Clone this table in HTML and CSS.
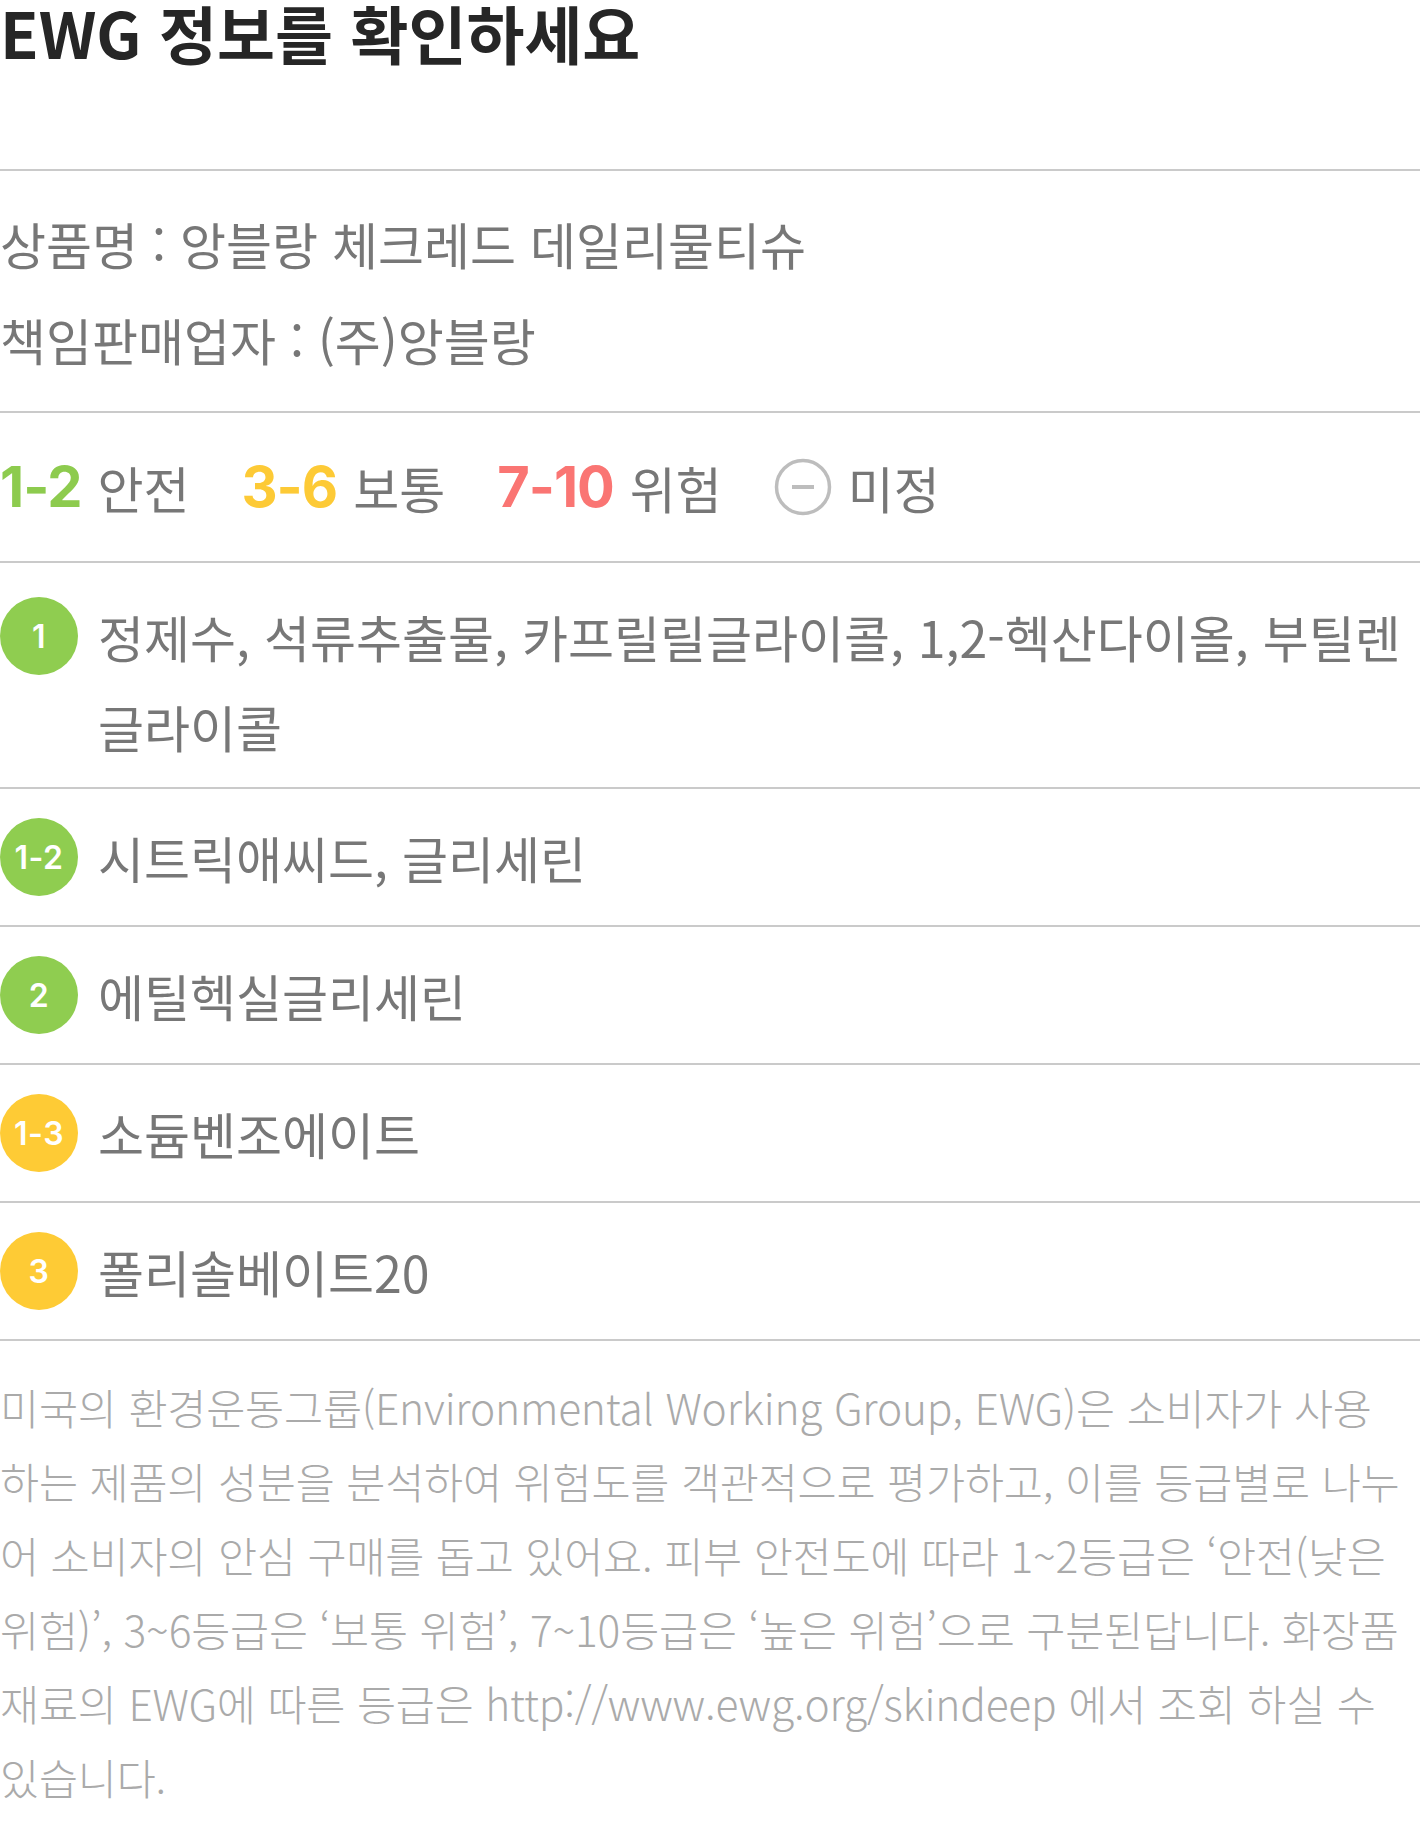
FILE: index.html
```html
<!DOCTYPE html>
<html lang="ko">
<head>
<meta charset="utf-8">
<title>EWG 정보</title>
<link rel="stylesheet" href="styles.css">
</head>
<body>
<div class="page">
  <h1 class="title">EWG 정보를 확인하세요</h1>
  <section class="product">
    <p>상품명 : 앙블랑 체크레드 데일리물티슈</p>
    <p>책임판매업자 : (주)앙블랑</p>
  </section>
  <section class="legend">
    <span class="lg"><b class="num green">1-2</b>안전</span>
    <span class="lg"><b class="num yellow">3-6</b>보통</span>
    <span class="lg"><b class="num red">7-10</b>위험</span>
    <span class="lg"><svg class="none-icon" viewBox="0 0 58 58" width="58" height="58"><circle cx="29" cy="29" r="26.5" fill="none" stroke="#bdbdbd" stroke-width="3.5"/><line x1="18" y1="29" x2="40" y2="29" stroke="#bdbdbd" stroke-width="4"/></svg>미정</span>
  </section>
  <ul class="ingredients">
    <li class="row multi"><span class="badge green">1</span><span class="name">정제수, 석류추출물, 카프릴릴글라이콜, 1,2-헥산다이올, 부틸렌글라이콜</span></li>
    <li class="row"><span class="badge green">1-2</span><span class="name">시트릭애씨드, 글리세린</span></li>
    <li class="row"><span class="badge green">2</span><span class="name">에틸헥실글리세린</span></li>
    <li class="row"><span class="badge yellow">1-3</span><span class="name">소듐벤조에이트</span></li>
    <li class="row"><span class="badge yellow">3</span><span class="name">폴리솔베이트20</span></li>
  </ul>
  <p class="note">미국의 환경운동그룹(Environmental Working Group, EWG)은 소비자가 사용<br>하는 제품의 성분을 분석하여 위험도를 객관적으로 평가하고, 이를 등급별로 나누<br>어 소비자의 안심 구매를 돕고 있어요. 피부 안전도에 따라 1~2등급은 ‘안전(낮은<br>위험)’, 3~6등급은 ‘보통 위험’, 7~10등급은 ‘높은 위험’으로 구분된답니다. 화장품<br>재료의 EWG에 따른 등급은 http://www.ewg.org/skindeep 에서 조회 하실 수<br>있습니다.</p>
</div>
</body>
</html>
```

FILE: styles.css
```css
html, body {
  margin: 0;
  padding: 0;
  background: #ffffff;
}

body {
  font-family: "Noto Sans CJK KR", "Noto Sans", sans-serif;
  color: #777777;
}

.page {
  width: 1420px;
}

.title {
  margin: 0;
  font-size: 63px;
  font-weight: 700;
  line-height: 64px;
  letter-spacing: 0;
  color: #262626;
  padding-bottom: 105px;
  border-bottom: 2px solid #cacaca;
}

.product {
  padding: 24px 0;
  border-bottom: 2px solid #cacaca;
}

.product p {
  margin: 0;
  font-size: 50px;
  font-weight: 400;
  line-height: 96px;
  color: #777777;
}

.legend {
  display: flex;
  align-items: center;
  gap: 52px;
  height: 148px;
  border-bottom: 2px solid #cacaca;
  font-size: 50px;
  color: #777777;
}

.lg {
  display: flex;
  align-items: center;
}

.num {
  font-family: "Inter", "Noto Sans", sans-serif;
  font-weight: 700;
  font-size: 56px;
  letter-spacing: -1px;
  margin-right: 16px;
}

.green { color: #8dcb4e; }
.yellow { color: #fdca36; }
.red { color: #fa7573; }

.none-icon {
  display: block;
  margin-right: 16px;
}

.ingredients {
  list-style: none;
  margin: 0;
  padding: 0;
}

.row {
  display: flex;
  align-items: center;
  gap: 20px;
  height: 136px;
  border-bottom: 2px solid #cacaca;
}

.row.multi {
  align-items: flex-start;
  height: auto;
  padding: 34px 0 16px;
}

.badge {
  flex: none;
  width: 78px;
  height: 78px;
  border-radius: 50%;
  display: flex;
  align-items: center;
  justify-content: center;
  font-family: "Inter", "Noto Sans", sans-serif;
  font-weight: 600;
  font-size: 32px;
  letter-spacing: 0.5px;
  color: #ffffff;
}

.badge.green { background: #8fcd50; }
.badge.yellow { background: #fecb35; }

.name {
  font-size: 50px;
  line-height: 90px;
  color: #777777;
}

.row.multi .name {
  margin-top: -6px;
}

.note {
  margin: 0;
  padding: 29px 0 11px;
  font-size: 42.5px;
  font-weight: 300;
  letter-spacing: -0.2px;
  line-height: 74px;
  color: #aaaaaa;
}
```
